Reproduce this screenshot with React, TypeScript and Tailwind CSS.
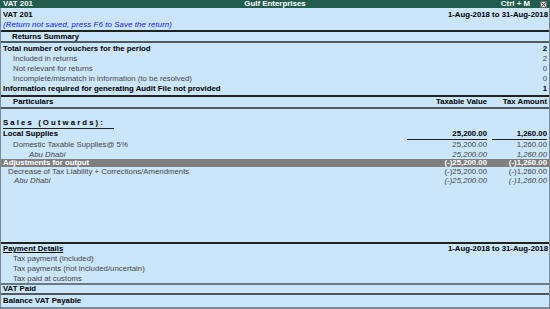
import React from "react";

type RowProps = {
  label: React.ReactNode;
  indent?: string;
  tv?: string;
  ta?: string;
  h: string;
  cls?: string;
  valCls?: string;
  line?: boolean;
};

function Row({ label, indent = "pl-[2px]", tv, ta, h, cls = "", valCls = "", line }: RowProps) {
  return (
    <div className={`flex items-center pr-[2px] whitespace-nowrap ${h} ${cls}`}>
      <div className={`flex-1 ${indent}`}>{label}</div>
      <div className={`w-[80px] text-right ${valCls} ${line ? "border-b border-[#222]" : ""}`}>{tv}</div>
      <div className={`w-[55px] ml-[5px] text-right ${valCls} ${line ? "border-b border-[#222]" : ""}`}>{ta}</div>
    </div>
  );
}

function SumRow({ label, v, h, cls = "", indent = "pl-[2px]" }: { label: string; v: string; h: string; cls?: string; indent?: string }) {
  return (
    <div className={`flex items-center justify-between pr-[2px] whitespace-nowrap ${h} ${cls}`}>
      <span className={indent}>{label}</span>
      <span>{v}</span>
    </div>
  );
}

export default function App() {
  return (
    <div className="w-[550px] h-[309px] overflow-hidden bg-[#cbe5fb] font-['Liberation_Sans',Arial,sans-serif] text-[7.8px] leading-none text-black flex flex-col">
      {/* Title bar */}
      <div className="h-[8px] shrink-0 bg-[#215c4d] text-white font-bold text-[7.9px] grid grid-cols-[1fr_auto_1fr] items-center px-[3px] whitespace-nowrap">
        <span>VAT 201</span>
        <span>Gulf Enterprises</span>
        <span className="flex items-center justify-end gap-[10px]">
          <span>Ctrl + M</span>
          <span className="w-[7px] h-[7px] bg-[#d9d9d9] border border-[#6b6b6b] flex items-center justify-center">
            <svg width="5" height="5" viewBox="0 0 5 5">
              <path d="M0.5 0.5 L4.5 4.5 M4.5 0.5 L0.5 4.5" stroke="#333" strokeWidth="1" />
            </svg>
          </span>
        </span>
      </div>

      <div className="flex-1 flex flex-col border-l border-r border-[#7d8a94]">
        {/* Header */}
        <div className="pt-[2px]">
          <div className="h-[10px] flex items-center justify-between pl-[2px] pr-[1px] font-bold">
            <span>VAT 201</span>
            <span>1-Aug-2018 to 31-Aug-2018</span>
          </div>
          <div className="h-[10px] flex items-center pl-[2px] italic text-[#1414ff] tracking-[0.12px]">
            (Return not saved, press F6 to Save the return)
          </div>
        </div>
        <div className="h-[2px] bg-[#222]" />
        <div className="h-[9px] flex items-center pl-[11px] font-bold">Returns Summary</div>
        <div className="h-[2px] bg-[#4e5a64]" />

        {/* Summary */}
        <div className="pt-[1px] pb-[1px]">
          <SumRow label="Total number of vouchers for the period" v="2" h="h-[10px]" cls="font-bold" />
          <SumRow label="Included in returns" v="2" h="h-[10px]" cls="text-[#474747]" indent="pl-[12px]" />
          <SumRow label="Not relevant for returns" v="0" h="h-[10px]" cls="text-[#474747]" indent="pl-[12px]" />
          <SumRow label="Incomplete/mismatch in information (to be resolved)" v="0" h="h-[10px]" cls="text-[#474747]" indent="pl-[12px]" />
          <SumRow label="Information required for generating Audit File not provided" v="1" h="h-[10px]" cls="font-bold" />
        </div>
        <div className="h-[2px] bg-[#222]" />
        <Row label="Particulars" indent="pl-[12px]" tv="Taxable Value" ta="Tax Amount" h="h-[10px]" cls="font-bold" />
        <div className="h-[2px] bg-[#4e5a64]" />

        {/* Body */}
        <div className="flex-1 flex flex-col">
          <div className="h-[8px]" />
          <div className="h-[11px] flex items-start pt-[2px] pl-[2px] font-bold">
            <span className="tracking-[2.1px] border-b border-[#222] w-[111px] pb-[1px]">Sales (Outwards):</span>
          </div>
          <Row label="Local Supplies" tv="25,200.00" ta="1,260.00" h="h-[12px]" cls="font-bold" valCls="h-[12px] flex items-center justify-end" line />
          <Row label="Domestic Taxable Supplies@ 5%" indent="pl-[12px]" tv="25,200.00" ta="1,260.00" h="h-[10px]" cls="text-[#474747]" />
          <Row label="Abu Dhabi" indent="pl-[28px]" tv="25,200.00" ta="1,260.00" h="h-[9px]" cls="text-[#474747] italic" />
          <Row label="Adjustments for output" tv="(-)25,200.00" ta="(-)1,260.00" h="h-[8px]" cls="bg-[#7f7f7f] text-white font-bold" />
          <Row label="Decrease of Tax Liability + Corrections/Amendments" indent="pl-[7px]" tv="(-)25,200.00" ta="(-)1,260.00" h="h-[9px]" cls="text-[#474747]" />
          <Row label="Abu Dhabi" indent="pl-[13px]" tv="(-)25,200.00" ta="(-)1,260.00" h="h-[9px]" cls="text-[#474747] italic" />
          <div className="flex-1" />
        </div>

        <div className="h-[2px] bg-[#222]" />
        <div className="h-[10px] flex items-center justify-between pl-[2px] pr-[1px] font-bold">
          <span className="underline underline-offset-[1px]">Payment Details</span>
          <span>1-Aug-2018 to 31-Aug-2018</span>
        </div>
        <div className="h-[10px] flex items-center pl-[12px] text-[#474747]">Tax payment (included)</div>
        <div className="h-[10px] flex items-center pl-[12px] text-[#474747]">Tax payments (not included/uncertain)</div>
        <div className="h-[9px] flex items-center pl-[12px] text-[#474747]">Tax paid at customs</div>
        <div className="h-[2px] bg-[#6c7a86]" />
        <div className="h-[8px] flex items-center pl-[2px] font-bold">VAT Paid</div>
        <div className="h-[2px] bg-[#50585f]" />
        <div className="h-[12px] flex items-center pl-[2px] font-bold">Balance VAT Payable</div>
        <div className="h-[2px] bg-[#7d8a94]" />
      </div>
    </div>
  );
}
